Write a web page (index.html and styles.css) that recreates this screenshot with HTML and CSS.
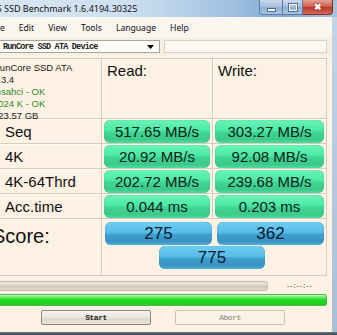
FILE: index.html
```html
<!DOCTYPE html>
<html lang="en">
<head>
    <meta charset="UTF-8">
    <title>AS SSD Benchmark</title>
    <link rel="stylesheet" href="styles.css">
</head>
<body>
    <div class="frame">
        <div class="titlebar">
            <span class="title">AS SSD Benchmark 1.6.4194.30325</span>
            <div class="win-buttons">
                <span class="wb wb-min"><i class="min-glyph"></i></span>
                <span class="wb wb-max"><i class="max-glyph"></i></span>
                <span class="wb wb-close">&#10006;</span>
            </div>
        </div>

        <div class="client">
            <div class="menubar">
                <span>File</span>
                <span>Edit</span>
                <span>View</span>
                <span>Tools</span>
                <span>Language</span>
                <span>Help</span>
            </div>

            <div class="devrow">
                <div class="combo">
                    <span>RunCore SSD ATA Device</span>
                    <svg width="7" height="4" viewBox="0 0 7 4"><path d="M0 0h7L3.5 4z" fill="#000"/></svg>
                </div>
                <div class="textbox"></div>
            </div>

            <div class="bench">
                <div class="cell info">
                    <div>RunCore SSD ATA</div>
                    <div>1.3.4</div>
                    <div class="ok">msahci - OK</div>
                    <div class="ok">1024 K - OK</div>
                    <div>223.57 GB</div>
                </div>
                <div class="cell head">Read:</div>
                <div class="cell head">Write:</div>

                <div class="cell label">Seq</div>
                <div class="cell"><div class="val green">517.65 MB/s</div></div>
                <div class="cell"><div class="val green">303.27 MB/s</div></div>

                <div class="cell label">4K</div>
                <div class="cell"><div class="val green">20.92 MB/s</div></div>
                <div class="cell"><div class="val green">92.08 MB/s</div></div>

                <div class="cell label">4K-64Thrd</div>
                <div class="cell"><div class="val green">202.72 MB/s</div></div>
                <div class="cell"><div class="val green">239.68 MB/s</div></div>

                <div class="cell label">Acc.time</div>
                <div class="cell"><div class="val green">0.044 ms</div></div>
                <div class="cell"><div class="val green">0.203 ms</div></div>

                <div class="cell score-label">Score:</div>
                <div class="cell score-cell">
                    <div class="val blue s-read">275</div>
                    <div class="val blue s-write">362</div>
                    <div class="val blue s-total">775</div>
                </div>
            </div>

            <div class="progress-row">
                <div class="progress"></div>
                <span class="eta">--:--:--</span>
            </div>

            <div class="greenbar"></div>

            <div class="buttons">
                <button class="btn">Start</button>
                <button class="btn disabled">Abort</button>
            </div>
        </div>
        <div class="bottom-strip"></div>
    </div>
</body>
</html>
```

FILE: styles.css
```css
body {
    margin: 0;
    width: 337px;
    height: 335px;
    overflow: hidden;
    background-color: #b3c6da;
    font-family: "Liberation Sans", Arial, sans-serif;
}

.frame {
    width: 337px;
    height: 335px;
    overflow: hidden;
    background: linear-gradient(to bottom, #c4d5e6, #a9bfd6);
}

/* заголовок окна */
.titlebar {
    height: 17px;
    margin-left: -10px;
    display: flex;
    justify-content: space-between;
    align-items: flex-start;
    background: linear-gradient(to right, #d9e6f2 0%, #cddff0 40%, #9fc0e0 70%, #7ea9d4 85%, #a8c4e0 100%);
}

.title {
    font-family: "Noto Sans", sans-serif;
    font-size: 9px;
    line-height: 17px;
    color: #111;
    padding-left: 1px;
}

.win-buttons {
    display: flex;
    margin-right: 4px;
    height: 15px;
}

.wb {
    height: 14px;
    border: 1px solid #5f7c9e;
    border-top: none;
    box-sizing: content-box;
    display: flex;
    align-items: center;
    justify-content: center;
}

.wb-min {
    width: 22px;
    border-radius: 0 0 0 4px;
    background: linear-gradient(to bottom, #c9dbee, #a3bedc 50%, #8eb0d4 51%, #a9c5e2);
}

.wb-max {
    width: 19px;
    border-left: none;
    background: linear-gradient(to bottom, #c9dbee, #a3bedc 50%, #8eb0d4 51%, #a9c5e2);
}

.min-glyph {
    width: 7px;
    height: 2px;
    margin-top: 5px;
    background: #fff;
    border: 1px solid #52698a;
}

.max-glyph {
    width: 6px;
    height: 5px;
    border: 1px solid #fff;
    outline: 1px solid #52698a;
}

.wb-close {
    width: 29px;
    border-left: none;
    border-radius: 0 0 4px 0;
    border-color: #8a2f28;
    background: linear-gradient(to bottom, #e3a197, #cf5a4b 50%, #b93426 51%, #d36b54);
    color: #fff;
    font-size: 9px;
    font-weight: bold;
    text-shadow: 0 0 2px #6b1a12;
}

/* рабочая область */
.client {
    margin-left: -10px;
    width: 342px;
    height: 315px;
    background-color: #fcf1e3;
}

.menubar {
    height: 21px;
    display: flex;
    align-items: center;
    gap: 14px;
    padding-left: 1px;
    background-color: #f9f5ef;
    font-family: "Noto Sans", sans-serif;
    font-size: 8.6px;
    color: #111;
}

.devrow {
    height: 17px;
    padding-top: 2px;
    box-sizing: border-box;
    display: flex;
    gap: 4px;
    background-color: #f6efe4;
}

.combo {
    width: 167px;
    height: 13px;
    margin-left: 3px;
    padding-left: 9px;
    padding-right: 5px;
    box-sizing: border-box;
    border: 1px solid #a9a49c;
    background: #fffdf8;
    display: flex;
    align-items: center;
    justify-content: space-between;
    font-family: "Liberation Mono", monospace;
    font-weight: bold;
    font-size: 8.5px;
    letter-spacing: -0.8px;
    color: #222;
}

.textbox {
    width: 163px;
    height: 13px;
    box-sizing: border-box;
    border: 1px solid #d9d1c4;
    background: #fdf8ef;
}

/* таблица результатов */
.bench {
    margin-top: 3px;
    width: 337px;
    display: grid;
    grid-template-columns: 112px 111px 114px;
    grid-template-rows: 60px 25px 25px 25px 25px 57px;
    border-top: 1px solid #d5ccbd;
}

.cell {
    box-sizing: border-box;
    border-right: 1px solid #d5ccbd;
    border-bottom: 1px solid #d5ccbd;
    box-shadow: inset 1px 1px 0 #fffaf2;
    padding: 1px 2px 0 2px;
}

.info {
    padding: 3px 0 0 3px;
    font-size: 9.5px;
    line-height: 12px;
    color: #222;
}

.info .ok {
    color: #2f8a2a;
}

.head {
    font-size: 15px;
    padding: 3px 0 0 5px;
    color: #111;
}

.label {
    font-size: 15px;
    line-height: 24px;
    padding-left: 15px;
    color: #111;
}

.val {
    height: 23px;
    border-radius: 6px;
    display: flex;
    align-items: center;
    justify-content: center;
    font-size: 15px;
    color: #10201a;
}

.green {
    background: linear-gradient(to bottom, #6af3b8 0%, #4ce9a4 45%, #3fd493 55%, #3cc98b 85%, #4fe0a0 100%);
    box-shadow: inset 0 0 1px #2ea874;
}

.blue {
    height: 23px;
    font-size: 17px;
    color: #0c1a2c;
    background: linear-gradient(to bottom, #6fcdf1 0%, #57bde9 45%, #3f9fd0 55%, #3a93c4 85%, #4fb3e2 100%);
    box-shadow: inset 0 0 1px #2b7aa8;
}

.score-label {
    font-size: 20px;
    padding: 6px 0 0 2px;
    color: #111;
}

.score-cell {
    grid-column: 2 / 4;
    display: grid;
    grid-template-columns: 107px 107px;
    column-gap: 5px;
    row-gap: 1px;
    padding: 3px 0 0 3px;
    align-content: start;
}

.s-total {
    grid-column: 1 / 3;
    justify-self: center;
    width: 106px;
    margin-right: 5px;
}

.progress-row {
    margin-top: 4px;
    height: 11px;
    display: flex;
    align-items: center;
}

.progress {
    width: 276px;
    height: 10px;
    margin-left: 2px;
    border-radius: 3px;
    border: 1px solid #c7bdaf;
    box-sizing: border-box;
    background: linear-gradient(to bottom, #efe8dd, #ddd4c7 50%, #cfc5b7 51%, #e2dacd);
}

.eta {
    margin-left: 18px;
    font-family: "Liberation Mono", monospace;
    font-size: 7px;
    letter-spacing: -1px;
    color: #555;
}

.greenbar {
    margin-top: 3px;
    margin-left: 2px;
    width: 335px;
    height: 12px;
    border-radius: 2px;
    border: 1px solid #52b352;
    box-sizing: border-box;
    background: linear-gradient(to bottom, #c6f7c0 0%, #4fe84a 30%, #1fd81f 55%, #22cc22 100%);
}

.buttons {
    margin-top: 4px;
    padding-left: 51px;
    display: flex;
    gap: 24px;
}

.btn {
    width: 110px;
    height: 15px;
    padding: 0;
    border: 1px solid #8a8782;
    border-radius: 2px;
    background: linear-gradient(to bottom, #f7f4ef, #ebe5dc 50%, #ddd6cb 51%, #e8e2d8);
    font-family: "Liberation Mono", monospace;
    font-weight: bold;
    font-size: 8px;
    letter-spacing: -0.5px;
    color: #222;
}

.btn.disabled {
    border-color: #cbc2b5;
    background: #fbf3e7;
    color: #a9a196;
}

.bottom-strip {
    height: 3px;
    background: linear-gradient(to bottom, #6b7685, #3f4754);
}
```
